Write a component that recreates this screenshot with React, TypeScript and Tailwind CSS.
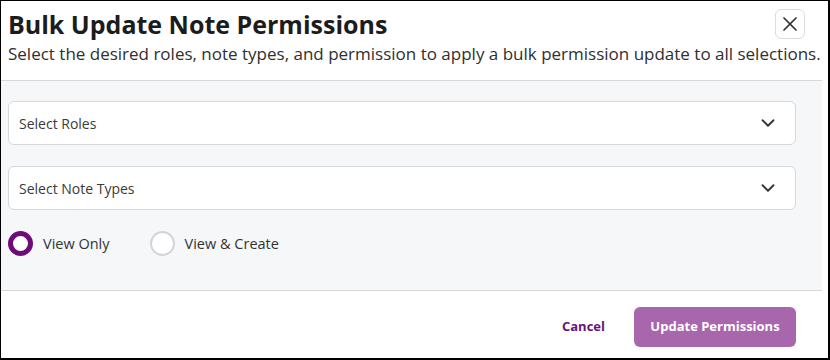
import { ChevronDown, X } from 'lucide-react';

function SelectBox({ label }: { label: string }) {
  return (
    <div className="flex h-[44px] items-center justify-between rounded-md border border-[#d5d8dc] bg-white pl-[10px] pr-[16px]">
      <span className="text-[14px] text-[#3a3a3a]">{label}</span>
      <ChevronDown className="h-[22px] w-[22px] text-[#333]" strokeWidth={2} />
    </div>
  );
}

function Radio({ label, checked }: { label: string; checked?: boolean }) {
  return (
    <label className="flex items-center gap-[10px]">
      <span
        className={
          checked
            ? 'h-[25px] w-[25px] rounded-full border-[5px] border-[#6e0b78] bg-white'
            : 'h-[25px] w-[25px] rounded-full border-2 border-[#d2d4d8] bg-white'
        }
      />
      <span className="text-[14.5px] text-[#333]">{label}</span>
    </label>
  );
}

export default function App() {
  return (
    <div
      className="h-[360px] w-[830px] overflow-hidden border-t border-l border-r-2 border-b-2 border-black bg-white"
      style={{ fontFamily: '"Open Sans", "Noto Sans", sans-serif' }}
    >
      <div className="w-[821px]">
        {/* Header */}
        <div className="h-[80px] border-b border-[#d6d8db] pl-[7px]">
          <div className="flex items-start justify-between pt-[6px] pr-[17px]">
            <h1 className="text-[25px] font-bold leading-[34px] text-[#1c1c1c]">
              Bulk Update Note Permissions
            </h1>
            <button className="mt-[2px] flex h-[30px] w-[30px] items-center justify-center rounded-md border border-[#d9dbde] bg-white">
              <X className="h-[24px] w-[24px] text-[#333]" strokeWidth={1.75} />
            </button>
          </div>
          <p className="mt-[1px] whitespace-nowrap text-[17px] leading-[24px] text-[#2f2f2f]">
            Select the desired roles, note types, and permission to apply a bulk permission update to all selections.
          </p>
        </div>

        {/* Body */}
        <div className="flex h-[210px] flex-col gap-[21px] border-b border-[#d6d8db] bg-[#f6f7f9] pt-[20px] pl-[7px] pr-[26px]">
          <SelectBox label="Select Roles" />
          <SelectBox label="Select Note Types" />
          <div className="flex items-center gap-[40px]">
            <Radio label="View Only" checked />
            <Radio label="View & Create" />
          </div>
        </div>

        {/* Footer */}
        <div className="flex h-[68px] items-center justify-end gap-[29px] pt-[3px] pr-[26px]">
          <button className="text-[13px] font-bold text-[#6b1180]">Cancel</button>
          <button className="h-[40px] w-[162px] rounded-md bg-[#a866ad] text-[13px] font-bold text-white">
            Update Permissions
          </button>
        </div>
      </div>
    </div>
  );
}
